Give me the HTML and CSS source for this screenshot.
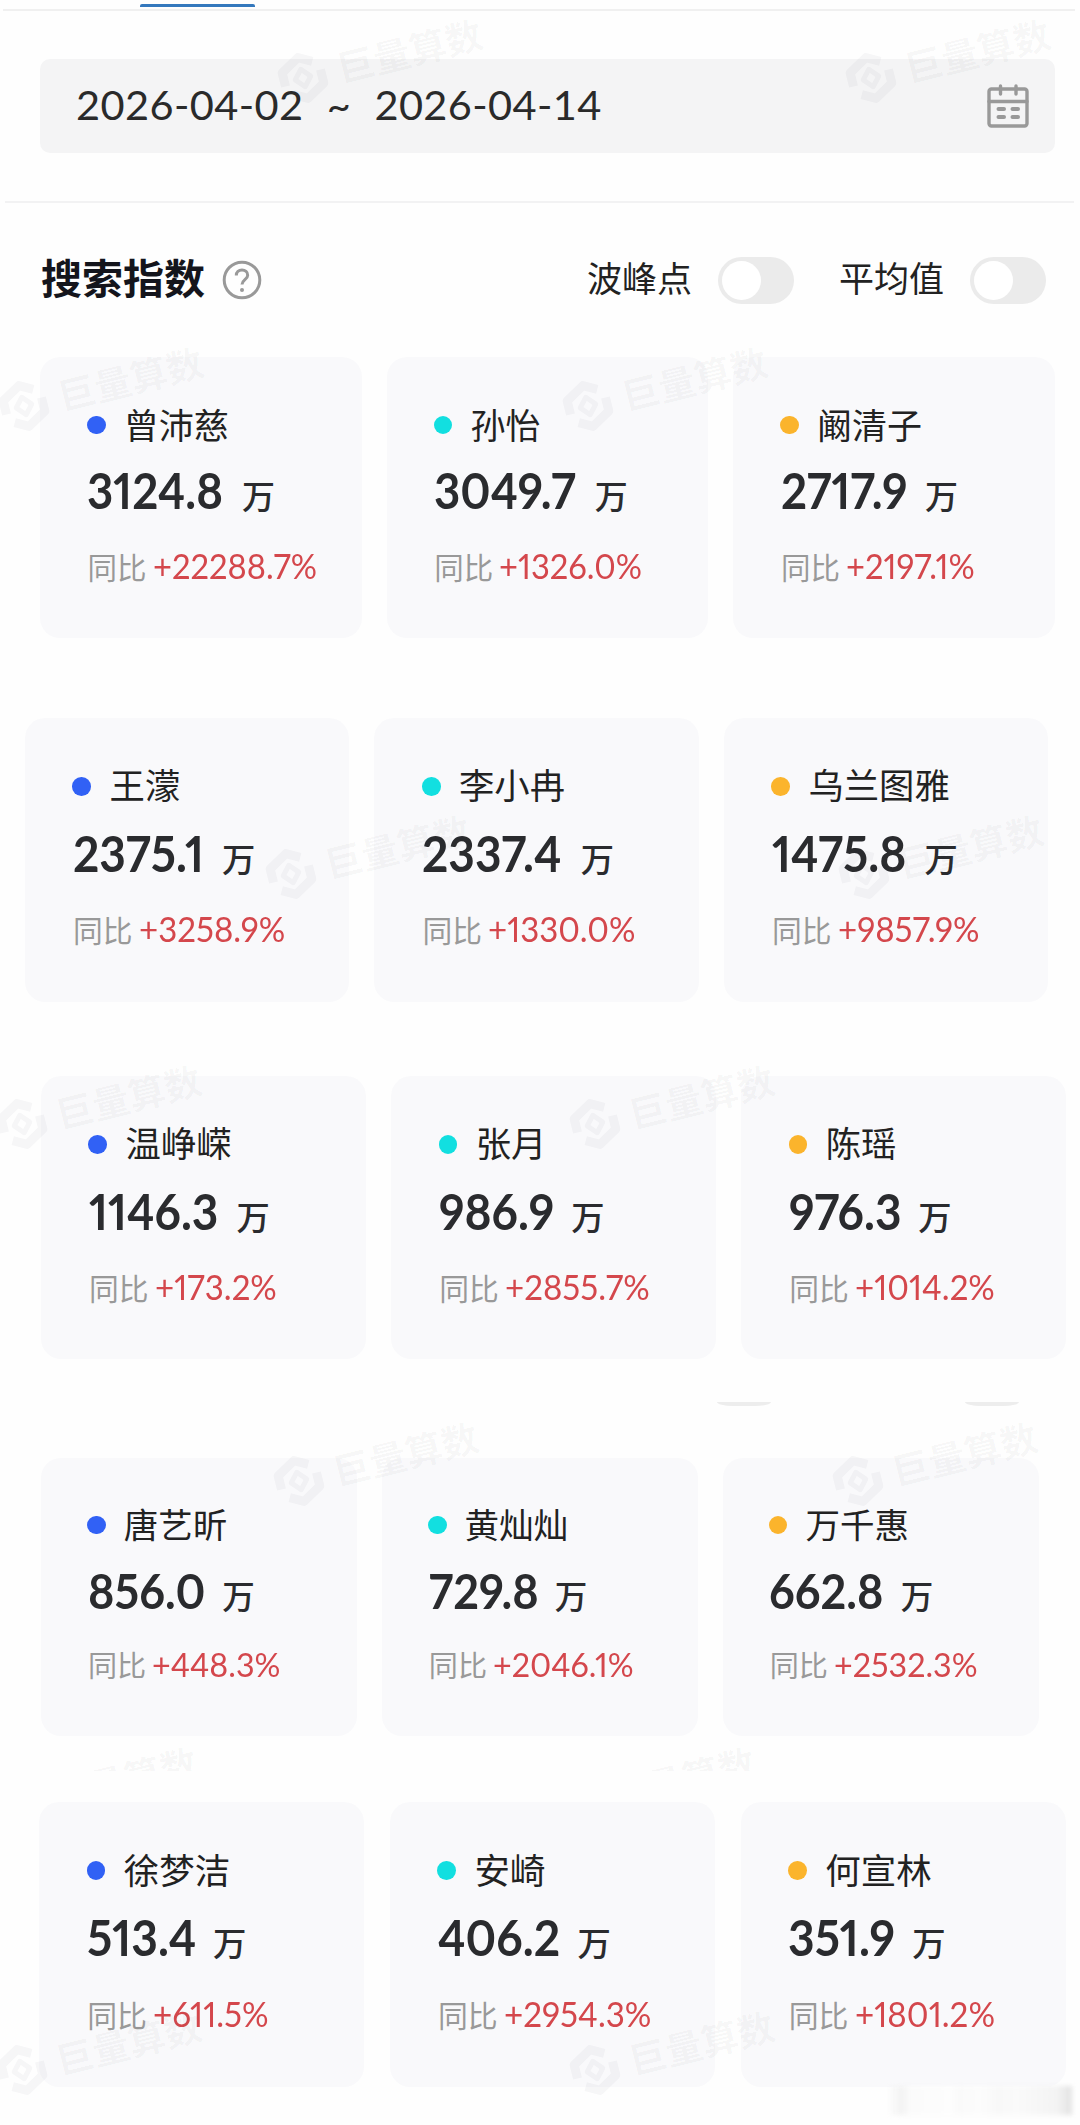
FILE: index.html
```
<!DOCTYPE html>
<html lang="zh-CN">
<head>
  <meta charset="UTF-8" />
  <title>搜索指数</title>
  <meta name="viewport" content="width=device-width, initial-scale=1.0" />
  <link rel="stylesheet" href="styles.css">
</head>
<body>

  <svg width="0" height="0" class="defs">
    <symbol id="logo" viewBox="0 0 52 52">
      <path d="M7 30V16L26 5l13 7M45 22v14L26 47l-13-7" fill="none" stroke="currentColor" stroke-width="9" stroke-linejoin="round" />
      <path d="M26 17l8 9-8 9-8-9z" fill="none" stroke="currentColor" stroke-width="5" stroke-linejoin="round" />
    </symbol>
  </svg>

  <div class="tabs"><div class="tab-line"></div></div>

  <div class="date-wrap">
    <div class="date-box">
      <div class="dates"><span>2026-04-02</span><span class="tilde">~</span><span>2026-04-14</span></div>
      <svg class="calendar" viewBox="0 0 42 44" fill="none" stroke="#999" stroke-width="3.4" stroke-linecap="round">
        <rect x="2" y="5" width="38" height="37" rx="2.5" />
        <path d="M2 17.5h38M13.5 2v8M29 2v8" />
        <path d="M11.5 25h5.5M25.5 25h5.5M11.5 33h5.5M25.5 33h5.5" stroke-width="4" />
      </svg>
    </div>
  </div>

  <div class="title-bar">
    <h1>搜索指数</h1>
    <svg class="help" viewBox="0 0 40 40" fill="none" stroke="#999" stroke-width="3">
      <circle cx="20" cy="20" r="17.8" />
      <path d="M14.3 15.5c0-3.4 2.5-5.5 5.7-5.5s5.7 2.1 5.7 5.2c0 4.4-5.7 4.6-5.7 9.3" />
      <circle cx="20" cy="30" r="2" fill="#999" stroke="none" />
    </svg>
    <span class="label">波峰点</span>
    <span class="toggle"></span>
    <span class="label label-avg">平均值</span>
    <span class="toggle"></span>
  </div>

  <div class="row row-1">
    <div class="card">
      <div class="name"><i class="dot blue"></i>曾沛慈</div>
      <div class="value"><b>3124.8</b>万</div>
      <div class="rate">同比<span>+22288.7%</span></div>
    </div>
    <div class="card">
      <div class="name"><i class="dot cyan"></i>孙怡</div>
      <div class="value"><b>3049.7</b>万</div>
      <div class="rate">同比<span>+1326.0%</span></div>
    </div>
    <div class="card">
      <div class="name"><i class="dot orange"></i>阚清子</div>
      <div class="value"><b>2717.9</b>万</div>
      <div class="rate">同比<span>+2197.1%</span></div>
    </div>
  </div>

  <div class="row row-2">
    <div class="card">
      <div class="name"><i class="dot blue"></i>王濛</div>
      <div class="value"><b>2375.1</b>万</div>
      <div class="rate">同比<span>+3258.9%</span></div>
    </div>
    <div class="card">
      <div class="name"><i class="dot cyan"></i>李小冉</div>
      <div class="value"><b>2337.4</b>万</div>
      <div class="rate">同比<span>+1330.0%</span></div>
    </div>
    <div class="card">
      <div class="name"><i class="dot orange"></i>乌兰图雅</div>
      <div class="value"><b>1475.8</b>万</div>
      <div class="rate">同比<span>+9857.9%</span></div>
    </div>
  </div>

  <div class="row row-3">
    <div class="card">
      <div class="name"><i class="dot blue"></i>温峥嵘</div>
      <div class="value"><b>1146.3</b>万</div>
      <div class="rate">同比<span>+173.2%</span></div>
    </div>
    <div class="card">
      <div class="name"><i class="dot cyan"></i>张月</div>
      <div class="value"><b>986.9</b>万</div>
      <div class="rate">同比<span>+2855.7%</span></div>
    </div>
    <div class="card">
      <div class="name"><i class="dot orange"></i>陈瑶</div>
      <div class="value"><b>976.3</b>万</div>
      <div class="rate">同比<span>+1014.2%</span></div>
    </div>
  </div>

  <div class="toggle-edges"><i></i><i></i></div>

  <div class="row row-4">
    <div class="card">
      <div class="name"><i class="dot blue"></i>唐艺昕</div>
      <div class="value"><b>856.0</b>万</div>
      <div class="rate">同比<span>+448.3%</span></div>
    </div>
    <div class="card">
      <div class="name"><i class="dot cyan"></i>黄灿灿</div>
      <div class="value"><b>729.8</b>万</div>
      <div class="rate">同比<span>+2046.1%</span></div>
    </div>
    <div class="card">
      <div class="name"><i class="dot orange"></i>万千惠</div>
      <div class="value"><b>662.8</b>万</div>
      <div class="rate">同比<span>+2532.3%</span></div>
    </div>
  </div>

  <div class="row row-5">
    <div class="card">
      <div class="name"><i class="dot blue"></i>徐梦洁</div>
      <div class="value"><b>513.4</b>万</div>
      <div class="rate">同比<span>+611.5%</span></div>
    </div>
    <div class="card">
      <div class="name"><i class="dot cyan"></i>安崎</div>
      <div class="value"><b>406.2</b>万</div>
      <div class="rate">同比<span>+2954.3%</span></div>
    </div>
    <div class="card">
      <div class="name"><i class="dot orange"></i>何宣林</div>
      <div class="value"><b>351.9</b>万</div>
      <div class="rate">同比<span>+1801.2%</span></div>
    </div>
  </div>

  <!-- watermarks over the page -->
  <div class="mark m1"><svg><use href="#logo" /></svg>巨量算数</div>
  <div class="mark m2"><svg><use href="#logo" /></svg>巨量算数</div>
  <div class="mark m3"><svg><use href="#logo" /></svg>巨量算数</div>
  <div class="mark m4"><svg><use href="#logo" /></svg>巨量算数</div>
  <div class="mark m5"><svg><use href="#logo" /></svg>巨量算数</div>
  <div class="mark m6"><svg><use href="#logo" /></svg>巨量算数</div>
  <div class="mark m7"><svg><use href="#logo" /></svg>巨量算数</div>
  <div class="mark m8"><svg><use href="#logo" /></svg>巨量算数</div>
  <div class="mark m9"><svg><use href="#logo" /></svg>巨量算数</div>
  <div class="mark m10"><svg><use href="#logo" /></svg>巨量算数</div>
  <div class="mark-clip">
    <div class="mark m11"><svg><use href="#logo" /></svg>巨量算数</div>
    <div class="mark m12"><svg><use href="#logo" /></svg>巨量算数</div>
  </div>
  <div class="mark m13"><svg><use href="#logo" /></svg>巨量算数</div>
  <div class="mark m14"><svg><use href="#logo" /></svg>巨量算数</div>

  <div class="smudge"></div>

</body>
</html>
```
FILE: styles.css
```
* { box-sizing: border-box; margin: 0; padding: 0; }
body {
  position: relative;
  width: 1080px;
  height: 2125px;
  overflow: hidden;
  background: #fefefe;
  color: #222;
  font-family: Lato, "Noto Sans CJK SC", sans-serif;
  font-variant-numeric: proportional-nums;
}
.defs { position: absolute; }

/* top */
.tabs {
  height: 11px;
  margin: 0 5px 0 3px;
  padding: 4px 0 0 137px;
  border-bottom: 2px solid #f0f0f0;
}
.tab-line {
  width: 115px;
  height: 3px;
  background: #3478bd;
  border-radius: 2px 2px 0 0;
}
.date-wrap {
  height: 192px;
  margin: 0 6px 0 5px;
  padding: 48px 19px 0 35px;
  border-bottom: 2px solid #f2f2f3;
}
.date-box {
  display: flex;
  align-items: center;
  justify-content: space-between;
  height: 94px;
  padding: 0 26px 0 36px;
  background: #f4f4f5;
  border-radius: 10px;
}
.dates {
  display: flex;
  font-size: 41.5px;
  line-height: 90px;
  height: 94px;
  letter-spacing: .4px;
  font-variant-numeric: tabular-nums;
  color: #2a2a2a;
}
.tilde { width: 71px; text-align: center; }
.calendar { width: 42px; height: 44px; }

.title-bar {
  display: flex;
  align-items: center;
  height: 47px;
  margin: 54px 34px 0 41px;
}
h1 {
  width: 181px;
  font-size: 41px;
  line-height: 43px;
  height: 47px;
  font-weight: 700;
  color: #14151c;
}
.help { width: 40px; height: 40px; margin: 0 auto 1px 0; }
.label { height: 47px; font-size: 35px; line-height: 43px; }
.label-avg { margin-left: 45px; }
.toggle {
  width: 76px;
  height: 47px;
  margin-left: 26px;
  padding: 4px;
  background: #ebebeb;
  border-radius: 24px;
}
.toggle::before {
  content: "";
  display: block;
  width: 39px;
  height: 39px;
  border-radius: 50%;
  background: #fff;
}

/* cards, everything inside scales with the row's font size */
.row { display: flex; gap: 2.5em; font-size: 10px; }
.row-1 { height: 281px; margin: 53px 25px 0 40px; }
.row-2 { height: 284px; margin: 80px 32px 0 25px; font-size: 10.1px; }
.row-3 { height: 283px; margin: 74px 14px 0 41px; font-size: 10.1px; }
.row-4 { height: 278px; margin: 52px 41px 0 41px; font-size: 9.87px; }
.row-5 { height: 285px; margin: 66px 14px 0 39px; font-size: 10.13px; }
.card {
  flex: 1;
  padding: 4.4em 0 0 4.7em;
  background: #f9f9fb;
  border-radius: 2em;
  white-space: nowrap;
}
.name {
  display: flex;
  align-items: center;
  height: 1.37em;
  font-size: 3.5em;
  line-height: 1.27em;
}
.dot {
  width: .53em;
  height: .53em;
  margin-right: .52em;
  border-radius: 50%;
}
.blue { background: #3161f5; }
.cyan { background: #12dfe0; }
.orange { background: #fbb42c; }
.value {
  height: 1.6em;
  margin: .53em 0 0 .01em;
  font-size: 3.3em;
  line-height: 1.6em;
  font-weight: 500;
  color: #2a2b2e;
}
.value b {
  display: inline-block;
  margin-right: .17em;
  font-size: 1.485em;
  line-height: 1;
  font-weight: 700;
  transform: scaleX(.93);
  transform-origin: 0 0;
}
.rate {
  margin: .85em 0 0 .02em;
  font-size: 2.95em;
  line-height: 1.6em;
  color: #999;
}
.rate span {
  display: inline-block;
  margin-left: .18em;
  font-size: 1.15em;
  line-height: 1;
  color: #d4474c;
  transform: scaleX(.965);
  transform-origin: 0 0;
}

/* bottom edges of two more toggles */
.toggle-edges {
  display: flex;
  gap: 194px;
  height: 4px;
  margin: 43px 0 0 717px;
}
.toggle-edges i {
  width: 54px;
  background: #ededed;
  border-radius: 0 0 16px 16px / 0 0 4px 4px;
}

/* watermark */
.mark {
  position: absolute;
  display: flex;
  align-items: center;
  gap: 10px;
  height: 54px;
  font-size: 37px;
  line-height: 54px;
  font-weight: 700;
  color: rgba(40, 40, 50, .035);
  white-space: nowrap;
  transform: rotate(-14deg);
  transform-origin: 26px 27px;
}
.mark svg { width: 52px; height: 52px; }
.m1 { left: 277px; top: 51px; }
.m2 { left: 845px; top: 51px; }
.m3 { left: -2px; top: 379px; }
.m4 { left: 562px; top: 379px; }
.m5 { left: 265px; top: 847px; }
.m6 { left: 838px; top: 847px; }
.m7 { left: -4px; top: 1097px; }
.m8 { left: 569px; top: 1097px; }
.m9 { left: 273px; top: 1454px; }
.m10 { left: 832px; top: 1454px; }
.mark-clip {
  position: absolute;
  left: 0;
  top: 1740px;
  width: 1080px;
  height: 31px;
  overflow: hidden;
}
.m11 { left: -8px; top: 39px; }
.m12 { left: 550px; top: 39px; }
.m13 { left: -4px; top: 2043px; }
.m14 { left: 569px; top: 2043px; }

.smudge {
  position: absolute;
  left: 888px;
  top: 2086px;
  width: 184px;
  height: 29px;
  background: linear-gradient(90deg, transparent, #f2f2f2 7%, #fbfbfb 12%, #fdfdfd 35%, #fafafa 38%, #fcfcfc 50%, #f8f8f8 60%, #fafafa 70%, #f3f3f3 92%, #e2e2e2);
  filter: blur(2px);
}
```
